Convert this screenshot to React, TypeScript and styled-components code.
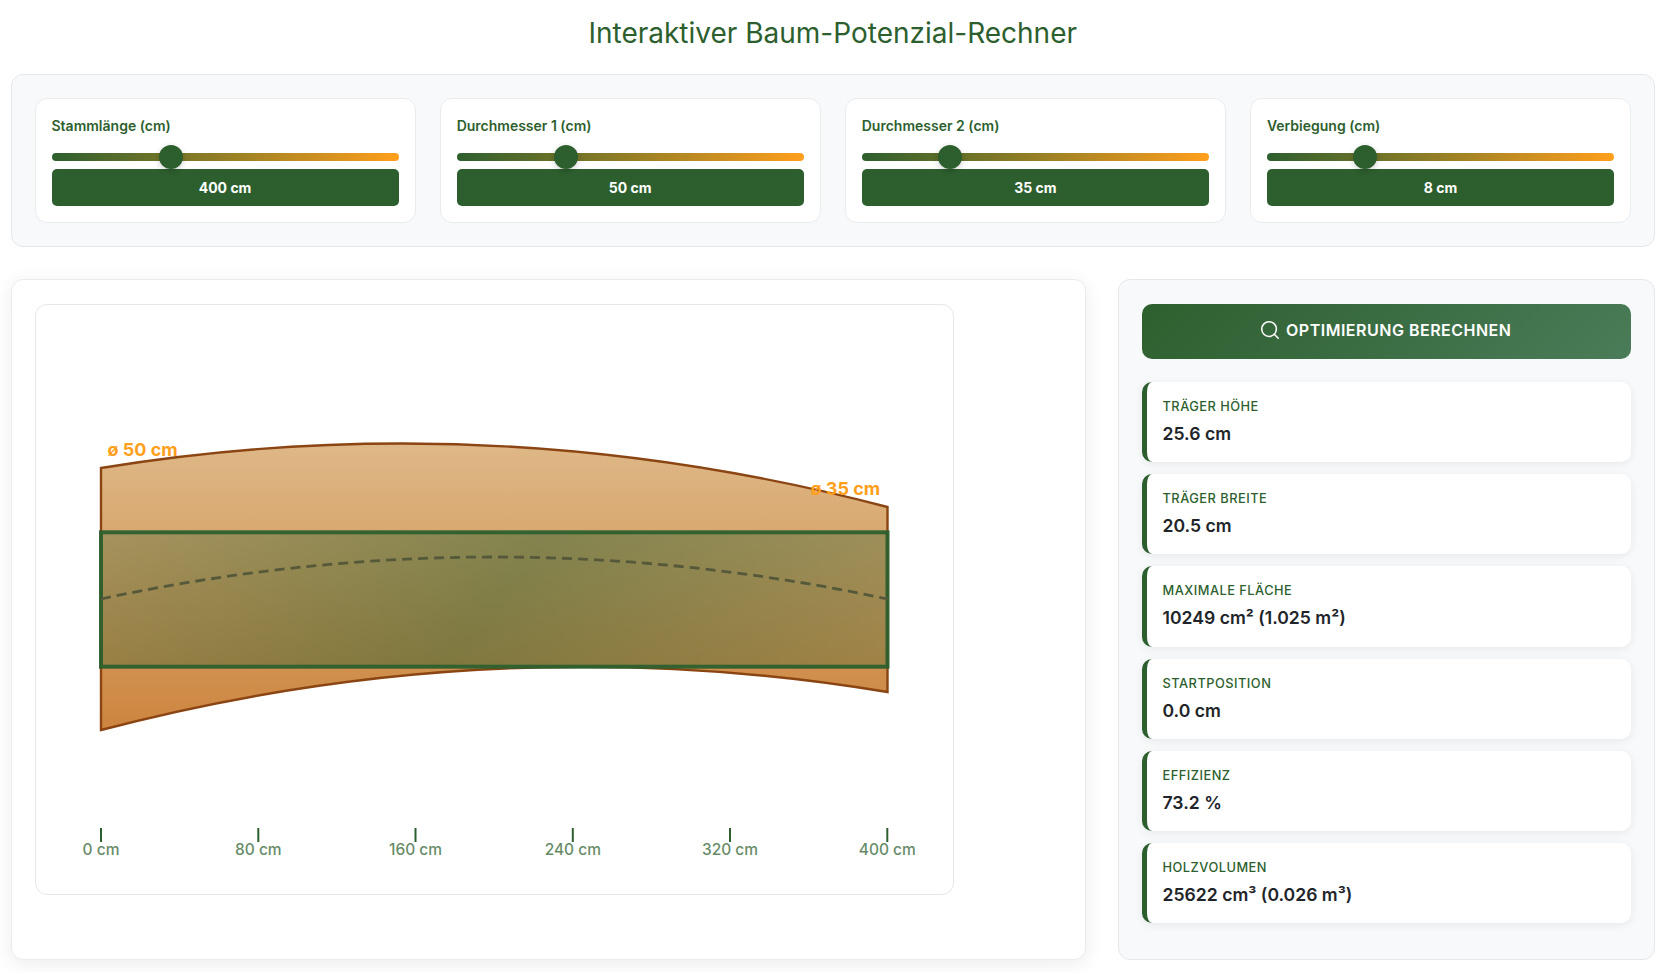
import React, { useState } from 'react'
import styled, { createGlobalStyle } from 'styled-components'
import { Search } from 'lucide-react'

const GREEN = '#2d5f2e'
const ORANGE = '#ff9f1c'

const GlobalStyle = createGlobalStyle`
  html, body {
    margin: 0;
    padding: 0;
    background: #ffffff;
  }
  body {
    font-family: Inter, 'Liberation Sans', sans-serif;
    color: #212529;
  }
  * {
    box-sizing: border-box;
  }
`

const Page = styled.div`
  padding: 16px 21px 0 10.5px;
  height: 972px;
  overflow: hidden;
`

const Title = styled.h1`
  margin: 0 0 24px;
  font-size: 28px;
  line-height: 34px;
  font-weight: 400;
  text-align: center;
  color: ${GREEN};
`

const ControlsPanel = styled.section`
  display: grid;
  grid-template-columns: repeat(4, 1fr);
  gap: 24px;
  padding: 23px;
  background: #f8f9fa;
  border: 1px solid #e5e7eb;
  border-radius: 12px;
`

const ControlCard = styled.div`
  padding: 16px;
  background: #ffffff;
  border: 1px solid #e9ecef;
  border-radius: 12px;
`

const ControlLabel = styled.label`
  display: block;
  font-size: 14px;
  line-height: 22px;
  font-weight: 600;
  color: ${GREEN};
`

const Slider = styled.input`
  display: block;
  position: relative;
  z-index: 1;
  width: 100%;
  height: 8px;
  margin: 16px 0 8px;
  border-radius: 4px;
  background: linear-gradient(90deg, ${GREEN}, ${ORANGE});
  appearance: none;
  outline: none;
  cursor: pointer;

  &::-webkit-slider-thumb {
    appearance: none;
    width: 24px;
    height: 24px;
    border-radius: 50%;
    background: ${GREEN};
    box-shadow: 0 2px 6px rgba(0, 0, 0, 0.2);
  }
`

const ValueBox = styled.div`
  height: 37px;
  line-height: 37px;
  text-align: center;
  font-size: 14px;
  font-weight: 700;
  color: #ffffff;
  background: ${GREEN};
  border-radius: 5px;
`

const Main = styled.div`
  display: grid;
  grid-template-columns: 2fr 1fr;
  gap: 32px;
  margin-top: 32px;
`

const DrawingPanel = styled.section`
  padding: 24px 23px;
  background: #ffffff;
  border: 1px solid #e9ecef;
  border-radius: 12px;
  box-shadow: 0 4px 20px rgba(0, 0, 0, 0.08);
`

const DrawingFrame = styled.div`
  width: 919px;
  height: 591px;
  background: #ffffff;
  border: 1px solid #e5e7eb;
  border-radius: 12px;

  svg {
    display: block;
  }
`

const DiameterText = styled.text`
  font-family: Inter, 'Liberation Sans', sans-serif;
  font-size: 18px;
  font-weight: 700;
  fill: ${ORANGE};
`

const AxisText = styled.text`
  font-family: Inter, 'Liberation Sans', sans-serif;
  font-size: 15.5px;
  font-weight: 500;
  fill: ${GREEN};
  opacity: 0.72;
  text-anchor: middle;
`

const ResultsPanel = styled.aside`
  padding: 24px 23px;
  background: #f8f9fa;
  border: 1px solid #e5e7eb;
  border-radius: 12px;
`

const CalcButton = styled.button`
  display: flex;
  align-items: center;
  justify-content: center;
  gap: 5px;
  width: 100%;
  height: 55px;
  margin-bottom: 23px;
  padding: 0 2px 3px 0;
  border: 0;
  border-radius: 10px;
  background: linear-gradient(135deg, ${GREEN}, #4a7c59);
  color: #ffffff;
  font-family: inherit;
  font-size: 16px;
  font-weight: 600;
  letter-spacing: 0.5px;
  text-transform: uppercase;
  cursor: pointer;
`

const ResultCard = styled.div`
  margin-bottom: 12px;
  padding: 16px;
  background: #ffffff;
  border-left: 5px solid ${GREEN};
  border-radius: 10px;
  box-shadow: 0 2px 10px rgba(0, 0, 0, 0.07);
`

const ResultLabel = styled.div`
  font-size: 12.8px;
  line-height: 18px;
  font-weight: 500;
  letter-spacing: 0.5px;
  text-transform: uppercase;
  color: ${GREEN};
`

const ResultValue = styled.div`
  margin-top: 5px;
  font-size: 17.6px;
  line-height: 25.2px;
  font-weight: 600;
  color: #212529;
`

const sliders = [
  { label: 'Stammlänge (cm)', min: 100, max: 1000, value: 400 },
  { label: 'Durchmesser 1 (cm)', min: 20, max: 120, value: 50 },
  { label: 'Durchmesser 2 (cm)', min: 15, max: 100, value: 35 },
  { label: 'Verbiegung (cm)', min: 0, max: 30, value: 8 }
]

const results = [
  { label: 'Träger Höhe', value: '25.6 cm' },
  { label: 'Träger Breite', value: '20.5 cm' },
  { label: 'Maximale Fläche', value: '10249 cm² (1.025 m²)' },
  { label: 'Startposition', value: '0.0 cm' },
  { label: 'Effizienz', value: '73.2 %' },
  { label: 'Holzvolumen', value: '25622 cm³ (0.026 m³)' }
]

const ticks = [
  { x: 100.5, label: '0 cm' },
  { x: 257.8, label: '80 cm' },
  { x: 415, label: '160 cm' },
  { x: 572.3, label: '240 cm' },
  { x: 729.5, label: '320 cm' },
  { x: 886.8, label: '400 cm' }
]

function TrunkDrawing() {
  // viewBox uses the same numbers as the page so the curves are easy to measure
  return (
    <svg width="917" height="589" viewBox="35.5 305 917 589">
      <defs>
        <linearGradient id="wood" x1="0" y1="0" x2="0" y2="1">
          <stop offset="0%" stopColor="#deb887" />
          <stop offset="100%" stopColor="#cd853f" />
        </linearGradient>
        <linearGradient id="beam" gradientUnits="userSpaceOnUse" x1="227" y1="388" x2="760" y2="810">
          <stop offset="0%" stopColor={GREEN} stopOpacity="0.3" />
          <stop offset="30%" stopColor={GREEN} stopOpacity="0.42" />
          <stop offset="50%" stopColor={GREEN} stopOpacity="0.5" />
          <stop offset="70%" stopColor={GREEN} stopOpacity="0.42" />
          <stop offset="100%" stopColor={GREEN} stopOpacity="0.3" />
        </linearGradient>
      </defs>
      <path
        d="M100.5 468 Q493.5 404 887 507 L887 692 Q493.5 627 100.5 730 Z"
        fill="url(#wood)"
        stroke="#8b4513"
        strokeWidth="2.4"
      />
      <rect x="100.5" y="532.3" width="786.5" height="134.4" fill="url(#beam)" stroke={GREEN} strokeWidth="4" strokeOpacity="0.95" />
      <path d="M100.5 599 Q493.5 515 887 599" fill="none" stroke="#55593a" strokeWidth="2.8" strokeDasharray="10 6" />
      <DiameterText x="107" y="456">ø 50 cm</DiameterText>
      <DiameterText x="810" y="495">ø 35 cm</DiameterText>
      {ticks.map(t => (
        <g key={t.label}>
          <line x1={t.x} y1="828" x2={t.x} y2="842" stroke={GREEN} strokeWidth="2" />
          <AxisText x={t.x} y="855">{t.label}</AxisText>
        </g>
      ))}
    </svg>
  )
}

export default function App() {
  const [values, setValues] = useState(sliders.map(s => s.value))

  return (
    <Page>
      <GlobalStyle />
      <Title>Interaktiver Baum-Potenzial-Rechner</Title>
      <ControlsPanel>
        {sliders.map((s, i) => (
          <ControlCard key={s.label}>
            <ControlLabel>{s.label}</ControlLabel>
            <Slider
              type="range"
              min={s.min}
              max={s.max}
              value={values[i]}
              onChange={e => setValues(values.map((v, j) => (j === i ? Number(e.target.value) : v)))}
            />
            <ValueBox>{values[i]} cm</ValueBox>
          </ControlCard>
        ))}
      </ControlsPanel>
      <Main>
        <DrawingPanel>
          <DrawingFrame>
            <TrunkDrawing />
          </DrawingFrame>
        </DrawingPanel>
        <ResultsPanel>
          <CalcButton>
            <Search size={22} strokeWidth={1.7} />
            Optimierung berechnen
          </CalcButton>
          {results.map(r => (
            <ResultCard key={r.label}>
              <ResultLabel>{r.label}</ResultLabel>
              <ResultValue>{r.value}</ResultValue>
            </ResultCard>
          ))}
        </ResultsPanel>
      </Main>
    </Page>
  )
}
